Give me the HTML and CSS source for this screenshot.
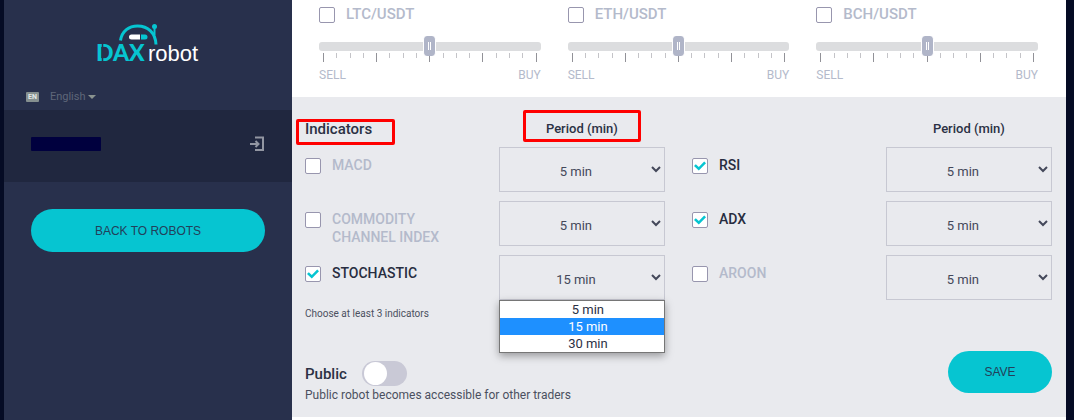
FILE: index.html
```html
<!DOCTYPE html>
<html lang="en">
<head>
<meta charset="utf-8">
<meta name="viewport" content="width=device-width, initial-scale=1">
<title>DAXrobot</title>
<link rel="stylesheet" href="styles.css">
</head>
<body>
<div class="app">
  <aside class="sidebar">
    <a class="logo" href="#" aria-label="DAXrobot">
      <svg width="112" height="52" viewBox="0 0 112 52">
        <path d="M23.500 19.500C25 10 32 5 40.500 5C51 5 58.500 12 59 23.500" fill="none" stroke="#06c5d1" stroke-width="3"/>
        <path d="M57.500 6v8" stroke="#06c5d1" stroke-width="2"/>
        <circle cx="57.500" cy="5.500" r="2.500" fill="#06c5d1"/>
        <path d="M34.500 13.500H43v5h-8.500a2.500 2.500 0 0 1 0-5z" fill="#fff"/>
        <path d="M44 13.500h4a2.500 2.500 0 0 1 0 5h-4z" fill="#06c5d1"/>
        <text class="logo-dax" x="-1" y="40">DAX</text>
        <path d="M5.500 23v18" stroke="#28304c" stroke-width="1.500"/>
        <text class="logo-robot" x="51" y="40">robot</text>
      </svg>
    </a>
    <button class="language" type="button"><span class="flag">EN</span>English<span class="caret"></span></button>
    <div class="account">
      <span class="account-name"></span>
      <a class="logout" href="#" aria-label="Log out">
        <svg width="16" height="16" viewBox="0 0 16 16" fill="none" stroke="#9296a2" stroke-width="2">
          <path d="M6 1.500h8v12.500H6M1 8h8" /><path d="M6.500 5l3 3-3 3"/>
        </svg>
      </a>
    </div>
    <div class="sidebar-action"><button class="btn btn-wide" type="button">BACK TO ROBOTS</button></div>
  </aside>

  <main class="main">
    <section class="pairs">
      <div class="pair">
        <label class="check"><input type="checkbox"><span>LTC/USDT</span></label>
        <div class="slider"><input type="range" min="0" max="16" value="8" aria-label="LTC/USDT level">
          <div class="ticks"><i></i><i></i><i></i><i></i><i></i><i></i><i></i><i></i><i></i><i></i><i></i><i></i><i></i><i></i><i></i><i></i><i></i></div></div>
        <div class="ends"><span>SELL</span><span>BUY</span></div>
      </div>
      <div class="pair">
        <label class="check"><input type="checkbox"><span>ETH/USDT</span></label>
        <div class="slider"><input type="range" min="0" max="16" value="8" aria-label="ETH/USDT level">
          <div class="ticks"><i></i><i></i><i></i><i></i><i></i><i></i><i></i><i></i><i></i><i></i><i></i><i></i><i></i><i></i><i></i><i></i><i></i></div></div>
        <div class="ends"><span>SELL</span><span>BUY</span></div>
      </div>
      <div class="pair">
        <label class="check"><input type="checkbox"><span>BCH/USDT</span></label>
        <div class="slider"><input type="range" min="0" max="16" value="8" aria-label="BCH/USDT level">
          <div class="ticks"><i></i><i></i><i></i><i></i><i></i><i></i><i></i><i></i><i></i><i></i><i></i><i></i><i></i><i></i><i></i><i></i><i></i></div></div>
        <div class="ends"><span>SELL</span><span>BUY</span></div>
      </div>
    </section>

    <form class="settings">
      <div class="indicators">
        <div class="group">
          <h2 class="title"><span class="mark mark-title">Indicators</span></h2>
          <div class="period-head"><span class="mark mark-period">Period (min)</span></div>
          <label class="check"><input type="checkbox"><span>MACD</span></label>
          <div class="period"><select aria-label="MACD period"><option>5 min</option><option>15 min</option><option>30 min</option></select></div>
          <label class="check"><input type="checkbox"><span>COMMODITY CHANNEL INDEX</span></label>
          <div class="period"><select aria-label="Commodity channel index period"><option>5 min</option><option>15 min</option><option>30 min</option></select></div>
          <label class="check"><input type="checkbox" checked><span>STOCHASTIC</span></label>
          <div class="period">
            <select aria-label="Stochastic period"><option>5 min</option><option selected>15 min</option><option>30 min</option></select>
            <ul class="menu" role="listbox" aria-label="Stochastic period options">
              <li role="option">5 min</li>
              <li role="option" aria-selected="true" class="active">15 min</li>
              <li role="option">30 min</li>
            </ul>
          </div>
        </div>
        <div class="group">
          <div></div>
          <div class="period-head"><span>Period (min)</span></div>
          <label class="check"><input type="checkbox" checked><span>RSI</span></label>
          <div class="period"><select aria-label="RSI period"><option>5 min</option><option>15 min</option><option>30 min</option></select></div>
          <label class="check"><input type="checkbox" checked><span>ADX</span></label>
          <div class="period"><select aria-label="ADX period"><option>5 min</option><option>15 min</option><option>30 min</option></select></div>
          <label class="check"><input type="checkbox"><span>AROON</span></label>
          <div class="period"><select aria-label="Aroon period"><option>5 min</option><option>15 min</option><option>30 min</option></select></div>
        </div>
      </div>
      <p class="hint">Choose at least 3 indicators</p>
      <div class="footer">
        <div class="public">
          <label class="switch">Public<input type="checkbox"></label>
          <p class="note">Public robot becomes accessible for other traders</p>
        </div>
        <button class="btn" type="button">SAVE</button>
      </div>
    </form>
  </main>
</div>
</body>
</html>
```
FILE: styles.css
```css
* { box-sizing: border-box; }
body {
  margin: 0;
  background: #050b24;
  color: #2b3144;
  font-family: Roboto, "Liberation Sans", sans-serif;
  font-size: 13px;
}
h2, p, ul { margin: 0; padding: 0; }
button, select, input { font: inherit; margin: 0; }

.app { display: flex; min-height: 100vh; padding: 0 8px 0 4px; }

.sidebar { flex: 0 0 288px; background: #28304c; }
.logo { display: block; padding: 21px 0 0 93px; }
.logo svg { display: block; overflow: visible; }
.logo-dax { font: 900 23px Lato, sans-serif; fill: #06c5d1; }
.logo-robot { font: 22px "Liberation Sans", sans-serif; fill: #fff; }
.language {
  display: flex;
  align-items: center;
  margin: 16px 0 6px 22px;
  padding: 0;
  border: 0;
  background: none;
  color: #5f6779;
  font-size: 11px;
  line-height: 15px;
}
.flag {
  margin-right: 11px;
  padding: 0 2px;
  border-radius: 1px;
  background: #858f8f;
  color: #e4e8e8;
  font-size: 7px;
  font-weight: 700;
  line-height: 10px;
}
.caret { margin-left: 3px; border: 4px solid transparent; border-top-color: #8a938f; border-bottom: 0; }
.account {
  display: flex;
  align-items: center;
  justify-content: space-between;
  height: 72px;
  padding: 0 27px;
  background: #20273f;
}
.account-name { width: 70px; height: 14px; margin-bottom: 4px; border-radius: 1px; background: #00003e; }
.logout { margin-bottom: 4px; }
.logout svg { display: block; }
.sidebar-action { padding: 27px; }
.btn {
  min-width: 104px;
  height: 42px;
  border: 0;
  border-radius: 21px;
  background: #06c5d1;
  color: #22405a;
  font-family: "Liberation Sans", sans-serif;
  font-size: 12px;
}
.btn-wide { width: 100%; height: 43px; border-radius: 22px; }

.main { flex: 1; min-width: 0; background: #fff; }
.pairs { display: grid; grid-template-columns: repeat(3, 1fr); gap: 27px; padding: 5px 28px 14px 27px; }

.check { display: flex; align-items: flex-start; gap: 11px; color: #b4bacb; font-size: 15px; font-weight: 500; line-height: 18px; }
.check:has(:checked) { color: #272d40; }
.check input {
  flex: none;
  appearance: none;
  width: 16px;
  height: 16px;
  margin-top: 2px;
  border: 1px solid #9896ae;
  border-radius: 2px;
  background: #fff;
}
.check input:checked { display: grid; place-items: center; }
.check input:checked::after {
  content: "";
  width: 12px;
  height: 10px;
  background: #06c5d1;
  clip-path: polygon(0 50%, 15% 32%, 40% 60%, 85% 5%, 100% 22%, 40% 95%);
}

.slider { margin-top: 13px; }
.slider input { display: block; position: relative; z-index: 1; appearance: none; width: 100%; height: 20px; background: none; }
.slider input::-webkit-slider-runnable-track { height: 9px; border-radius: 3px; background: #dcdddf; }
.slider input::-webkit-slider-thumb {
  appearance: none;
  width: 13px;
  height: 20px;
  margin-top: -6px;
  border: solid #fff;
  border-width: 0 1px;
  border-radius: 4px;
  background: linear-gradient(90deg, transparent 4px, #fff 4px 5px, transparent 5px 6px, #fff 6px 7px, transparent 7px) center / 11px 8px no-repeat #b0b5c8;
}
.ticks { display: flex; justify-content: space-between; height: 9px; margin-top: -3px; padding: 0 4px; }
.ticks i { width: 1px; height: 5px; background: #c4c4c8; }
.ticks i:nth-child(4n + 1) { height: 9px; background: #929298; }
.ends { display: flex; justify-content: space-between; margin-top: 5px; color: #b4bacb; font-size: 12px; line-height: 16px; }

.settings { padding: 23px 14px 14px 13px; background: #e9eaee; }
.indicators { display: grid; grid-template-columns: 1fr 1fr; gap: 27px; }
.group { display: grid; grid-template-columns: 7fr 6fr; row-gap: 9px; align-content: start; }
.title { font-size: 15px; font-weight: 500; line-height: 18px; }
.period-head { text-align: center; font-size: 13px; font-weight: 500; line-height: 18px; }
.mark { display: inline-block; position: relative; }
.mark::after { content: ""; position: absolute; border: 3px solid #f00; border-radius: 2px; }
.mark-title::after { inset: -1px -23px -7px -9px; }
.mark-period::after { inset: -10px -23px -4px; }
.group .check { padding: 9px 50px 0 0; font-size: 14px; }
.period { position: relative; }
.period select {
  display: block;
  width: 100%;
  height: 45px;
  padding: 3px 0 0;
  border: 1px solid #c7c8d2;
  border-radius: 0;
  background: transparent;
  color: #44485a;
  text-align: center;
  text-align-last: center;
}
.menu {
  position: absolute;
  top: 100%;
  left: 0;
  right: 0;
  border: 1px solid #767676;
  background: #fff;
  box-shadow: 0 3px 8px rgba(0, 0, 0, .35);
  list-style: none;
  text-align: center;
  line-height: 17px;
}
.menu li { padding-left: 12px; }
.menu .active { background: #1e90ff; color: #fff; }

.hint { margin-top: 6px; font-size: 10px; line-height: 16px; color: #4b5060; }
.footer { display: flex; align-items: flex-start; justify-content: space-between; margin-top: 29px; }
.public { padding-top: 10px; }
.switch { display: flex; align-items: center; gap: 15px; width: fit-content; font-size: 15px; font-weight: 500; }
.switch input { appearance: none; width: 45px; height: 25px; padding: 1px 2px; border-radius: 13px; background: #c9c9d6; }
.switch input::before { content: ""; display: block; width: 23px; height: 23px; border-radius: 50%; background: #fff; }
.switch input:checked { padding-left: 20px; background: #06c5d1; }
.note { margin-top: 1px; font-size: 12px; line-height: 16px; color: #4b5060; }
```
